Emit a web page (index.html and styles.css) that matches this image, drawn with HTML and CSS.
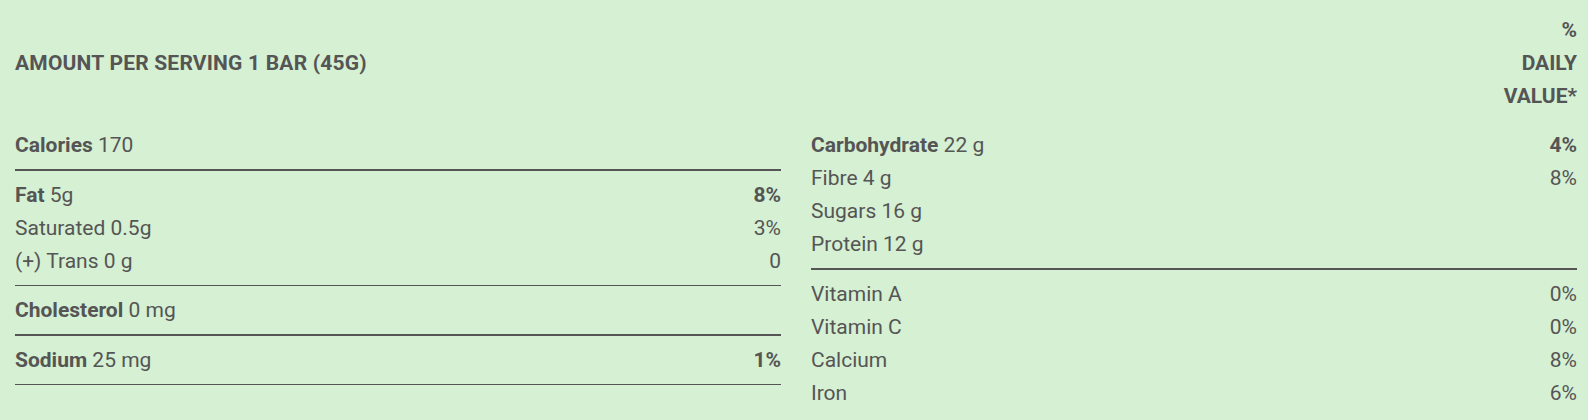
FILE: index.html
```html
<!DOCTYPE html>
<html lang="en">
<head>
<meta charset="utf-8">
<title>Nutrition Facts</title>
<link rel="stylesheet" href="styles.css">
</head>
<body>
<div class="panel">
  <div class="head">
    <div class="head-title">AMOUNT PER SERVING 1 BAR (45G)</div>
    <div class="head-dv">% DAILY VALUE*</div>
  </div>
  <div class="cols">
    <div class="col">
      <div class="grp thick">
        <div class="row"><span><b>Calories</b> 170</span></div>
      </div>
      <div class="grp thin">
        <div class="row"><span><b>Fat</b> 5g</span><b>8%</b></div>
        <div class="row"><span>Saturated 0.5g</span><span>3%</span></div>
        <div class="row"><span>(+) Trans 0 g</span><span>0</span></div>
      </div>
      <div class="grp thick">
        <div class="row"><span><b>Cholesterol</b> 0 mg</span></div>
      </div>
      <div class="grp thin">
        <div class="row"><span><b>Sodium</b> 25 mg</span><b>1%</b></div>
      </div>
    </div>
    <div class="col">
      <div class="grp thick">
        <div class="row"><span><b>Carbohydrate</b> 22 g</span><b>4%</b></div>
        <div class="row"><span>Fibre 4 g</span><span>8%</span></div>
        <div class="row"><span>Sugars 16 g</span></div>
        <div class="row"><span>Protein 12 g</span></div>
      </div>
      <div class="grp">
        <div class="row"><span>Vitamin A</span><span>0%</span></div>
        <div class="row"><span>Vitamin C</span><span>0%</span></div>
        <div class="row"><span>Calcium</span><span>8%</span></div>
        <div class="row"><span>Iron</span><span>6%</span></div>
      </div>
    </div>
  </div>
</div>
</body>
</html>
```
FILE: styles.css
```css
html, body {
  margin: 0;
  padding: 0;
  background: #d5f0d3;
}
body {
  font-family: Roboto, "Liberation Sans", Arial, sans-serif;
  font-size: 21px;
  line-height: 33px;
  color: #555555;
}
b {
  font-weight: 700;
}
.panel {
  padding: 6px 11px 0 15px;
}
.head {
  display: flex;
  justify-content: space-between;
  align-items: center;
  padding: 8px 0;
  font-weight: 700;
}
.head-title {
  letter-spacing: 0.2px;
}
.head-dv {
  width: min-content;
  text-align: right;
}
.cols {
  display: grid;
  grid-template-columns: 1fr 1fr;
  column-gap: 30px;
  align-items: start;
}
.grp {
  padding: 8px 0 7px;
}
.grp.thick {
  border-bottom: 2px solid #555555;
}
.grp.thin {
  border-bottom: 1px solid #555555;
}
.row {
  display: flex;
  justify-content: space-between;
  height: 33px;
}
```
